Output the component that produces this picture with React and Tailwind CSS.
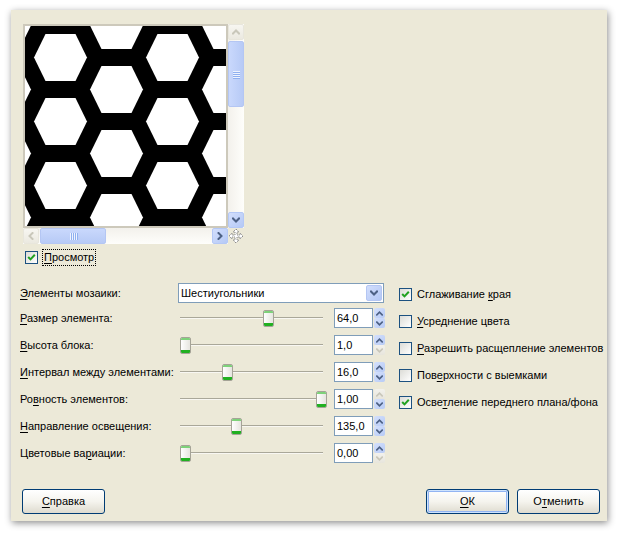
import React from "react";

const font = "font-['Tahoma','Liberation_Sans',sans-serif]";

function hexPoints(cx, cy) {
  const r = 26.5, h = 23.5, t = 15;
  return [
    [cx - r, cy], [cx - t, cy - h], [cx + t, cy - h],
    [cx + r, cy], [cx + t, cy + h], [cx - t, cy + h],
  ].map(([x, y]) => `${x},${y}`).join(" ");
}

function HexPattern() {
  const hexes = [];
  const ox = 25, oy = 26;
  const colsA = [60.5, 172.5];
  const colsB = [4.5, 116.5, 228.5];
  for (let n = -1; n < 5; n++) {
    colsA.forEach((cx) => hexes.push([cx - ox, 57.5 + 64 * n - oy]));
    colsB.forEach((cx) => hexes.push([cx - ox, 25.5 + 64 * n - oy]));
  }
  return (
    <svg width="201" height="200" viewBox="0 0 201 200" className="block">
      <rect width="201" height="200" fill="#000" />
      {hexes.map(([x, y], i) => (
        <polygon key={i} points={hexPoints(x, y)} fill="#fff" />
      ))}
    </svg>
  );
}

function Chevron({ dir, color, size = 8 }) {
  const paths = {
    up: "M1 5.5 L4 2.5 L7 5.5",
    down: "M1 2.5 L4 5.5 L7 2.5",
    left: "M5.5 1 L2.5 4 L5.5 7",
    right: "M2.5 1 L5.5 4 L2.5 7",
  };
  return (
    <svg width={size} height={size} viewBox="0 0 8 8">
      <path d={paths[dir]} stroke={color} strokeWidth="2" fill="none" strokeLinecap="square" />
    </svg>
  );
}

function ScrollBtn({ dir, disabled }) {
  return disabled ? (
    <div className="w-[16px] h-[16px] shrink-0 rounded-[2px] border border-[#e8e6dc] bg-gradient-to-b from-[#f7f6f1] to-[#ebe9e0] flex items-center justify-center">
      <Chevron dir={dir} color="#c9c7ba" />
    </div>
  ) : (
    <div className="w-[16px] h-[16px] shrink-0 rounded-[2px] border border-[#b4c8f6] bg-gradient-to-br from-[#d2defc] to-[#b5c9f6] flex items-center justify-center">
      <Chevron dir={dir} color="#4d6185" />
    </div>
  );
}

function MoveIcon() {
  return (
    <svg width="16" height="16" viewBox="0 0 16 16">
      <path
        d="M8 1 L11 4 L9 4 L9 7 L12 7 L12 5 L15 8 L12 11 L12 9 L9 9 L9 12 L11 12 L8 15 L5 12 L7 12 L7 9 L4 9 L4 11 L1 8 L4 5 L4 7 L7 7 L7 4 L5 4 Z"
        fill="#fff"
        stroke="#8a8a8a"
        strokeWidth="1"
        strokeDasharray="1.5 0.8"
      />
    </svg>
  );
}

function Check({ checked }) {
  return (
    <span className="w-[13px] h-[13px] shrink-0 border border-[#1c5180] bg-gradient-to-br from-[#dcdcd7] to-[#ffffff] flex items-center justify-center">
      {checked && (
        <svg width="9" height="9" viewBox="0 0 9 9">
          <path d="M1.2 4 L3.5 6.4 L7.8 1.8" stroke="#21a121" strokeWidth="2" fill="none" />
        </svg>
      )}
    </span>
  );
}

function Label({ pre = "", u, post }) {
  return (
    <span className="whitespace-nowrap">
      {pre}
      <u className="underline-offset-[2px]">{u}</u>
      {post}
    </span>
  );
}

function SpinHalf({ dir, disabled }) {
  return (
    <div
      className={
        "h-[10px] w-[11px] rounded-[2px] flex items-center justify-center " +
        (disabled
          ? "bg-gradient-to-b from-[#f3f2ed] to-[#e7e5dc]"
          : "bg-gradient-to-br from-[#d4e0fc] to-[#b7cbf6]")
      }
    >
      <Chevron dir={dir} color={disabled ? "#c9c7ba" : "#4d6185"} size={7} />
    </div>
  );
}

function SpinBox({ value, upDisabled, downDisabled }) {
  return (
    <div className="flex h-[20px]">
      <div className="w-[39px] h-[20px] border border-[#7f9db9] bg-white pl-[2px] flex items-center text-[11px] leading-none">
        {value}
      </div>
      <div className="flex flex-col ml-[1px]">
        <SpinHalf dir="up" disabled={upDisabled} />
        <SpinHalf dir="down" disabled={downDisabled} />
      </div>
    </div>
  );
}

function Slider({ thumb }) {
  return (
    <div className="relative w-[156px] h-[20px] flex items-center">
      <div className="absolute left-[2px] w-[143px] top-[9px] h-[1px] bg-[#a9a799]" />
      <div className="absolute left-[2px] w-[143px] top-[10px] h-[1px] bg-[#f8f7f2]" />
      <div
        className="relative w-[11px] h-[17px] rounded-[2px] border border-[#a5a397] bg-gradient-to-r from-[#ffffff] to-[#e6e5df] flex flex-col justify-between overflow-hidden"
        style={{ marginLeft: thumb }}
      >
        <div className="h-[2px] bg-[#7ed27a]" />
        <div className="h-[3px] bg-[#21b021]" />
      </div>
    </div>
  );
}

function XPButton({ children, def }) {
  return (
    <div
      className={
        "w-[83px] h-[25px] rounded-[3px] border border-[#003c74] bg-gradient-to-b from-[#ffffff] via-[#f5f4ee] to-[#dedbcf] flex items-center justify-center text-[11px] " +
        (def ? "shadow-[inset_0_0_0_1px_#cee3fd,inset_0_0_0_2px_#92b4f2]" : "")
      }
    >
      {children}
    </div>
  );
}

const rows = [
  { pre: "", u: "Р", post: "азмер элемента:", value: "64,0", thumb: 85 },
  { pre: "", u: "В", post: "ысота блока:", value: "1,0", thumb: 2, downDisabled: true },
  { pre: "", u: "И", post: "нтервал между элементами:", value: "16,0", thumb: 44 },
  { pre: "Ро", u: "в", post: "ность элементов:", value: "1,00", thumb: 138, upDisabled: true },
  { pre: "", u: "Н", post: "аправление освещения:", value: "135,0", thumb: 53 },
  { pre: "Цветовые ва", u: "р", post: "иации:", value: "0,00", thumb: 2, downDisabled: true },
];

const checks = [
  { checked: true, pre: "Сглаживание ", u: "к", post: "рая" },
  { checked: false, pre: "", u: "У", post: "среднение цвета" },
  { checked: false, pre: "", u: "Р", post: "азрешить расщепление элементов" },
  { checked: false, pre: "Пов", u: "е", post: "рхности с выемками" },
  { checked: true, pre: "Осве", u: "т", post: "ление переднего плана/фона" },
];

export default function App() {
  return (
    <div className={"w-[624px] h-[540px] bg-white pt-[10px] pl-[11px] text-black " + font}>
      <div className="w-[596px] h-[511px] bg-[#ece9d8] shadow-[1px_2px_7px_rgba(0,0,0,0.45)] flex flex-col pt-[14px] pl-[9px] pr-[7px] text-[11px]">
        {/* Preview */}
        <div className="ml-[3px] flex flex-col">
          <div className="flex">
            <div className="w-[205px] h-[204px] border-2 border-[#cdc9bb]">
              <HexPattern />
            </div>
            <div className="w-[16px] h-[204px] flex flex-col bg-gradient-to-r from-[#f3f1ec] to-[#fefefb]">
              <ScrollBtn dir="up" disabled />
              <div className="mt-[1px] h-[66px] w-[16px] rounded-[2px] border border-[#b4c6f3] bg-gradient-to-r from-[#c9d8fc] to-[#b7caf6] flex flex-col items-center justify-center gap-[1px]">
                {[0, 1, 2, 3].map((i) => (
                  <div key={i} className="w-[7px] h-[1px] bg-[#eef3fe] shadow-[0_1px_0_#8fb0f0]" />
                ))}
              </div>
              <div className="flex-1" />
              <ScrollBtn dir="down" />
            </div>
          </div>
          <div className="flex">
            <div className="w-[205px] h-[16px] flex bg-gradient-to-b from-[#f3f1ec] to-[#fefefb]">
              <ScrollBtn dir="left" disabled />
              <div className="ml-[1px] w-[66px] h-[16px] rounded-[2px] border border-[#b4c6f3] bg-gradient-to-b from-[#c9d8fc] to-[#b7caf6] flex items-center justify-center gap-[1px]">
                {[0, 1, 2, 3].map((i) => (
                  <div key={i} className="w-[1px] h-[7px] bg-[#eef3fe] shadow-[1px_0_0_#8fb0f0]" />
                ))}
              </div>
              <div className="flex-1" />
              <ScrollBtn dir="right" />
            </div>
            <div className="w-[16px] h-[16px] flex items-center justify-center">
              <MoveIcon />
            </div>
          </div>
        </div>

        {/* Preview checkbox */}
        <div className="mt-[5px] ml-[5px] h-[17px] flex items-center">
          <Check checked />
          <span className="ml-[4px] px-[1px] h-[17px] flex items-center border border-dotted border-black">
            <Label u="П" post="росмотр" />
          </span>
        </div>

        {/* Settings */}
        <div className="mt-[17px] flex">
          <div className="flex flex-col shrink-0">
            <div className="flex items-center h-[20px]">
              <div className="w-[158px]">
                <Label u="Э" post="лементы мозаики:" />
              </div>
              <div className="w-[206px] h-[20px] border border-[#7f9db9] bg-white flex items-center justify-between pl-[2px] pr-[1px]">
                <span>Шестиугольники</span>
                <div className="w-[16px] h-[16px] rounded-[2px] border border-[#b4c6f3] bg-gradient-to-br from-[#d2defc] to-[#b3c7f5] flex items-center justify-center">
                  <Chevron dir="down" color="#4d6185" />
                </div>
              </div>
            </div>
            <div className="mt-[5px] flex flex-col gap-[7px]">
              {rows.map((r, i) => (
                <div key={i} className="flex items-center h-[20px]">
                  <div className="w-[158px]">
                    <Label pre={r.pre} u={r.u} post={r.post} />
                  </div>
                  <Slider thumb={r.thumb} />
                  <SpinBox value={r.value} upDisabled={r.upDisabled} downDisabled={r.downDisabled} />
                </div>
              ))}
            </div>
          </div>
          <div className="ml-[14px] pt-[1px] flex flex-col gap-[7px] shrink-0">
            {checks.map((c, i) => (
              <div key={i} className="flex items-center h-[20px] whitespace-nowrap">
                <Check checked={c.checked} />
                <span className="ml-[5px]">
                  <Label pre={c.pre} u={c.u} post={c.post} />
                </span>
              </div>
            ))}
          </div>
        </div>

        {/* Buttons */}
        <div className="mt-[26px] ml-[2px] flex items-center">
          <XPButton>
            <Label u="С" post="правка" />
          </XPButton>
          <div className="flex-1" />
          <XPButton def>
            <Label u="О" post="К" />
          </XPButton>
          <div className="w-[8px]" />
          <XPButton>
            <Label pre="О" u="т" post="менить" />
          </XPButton>
        </div>
      </div>
    </div>
  );
}
